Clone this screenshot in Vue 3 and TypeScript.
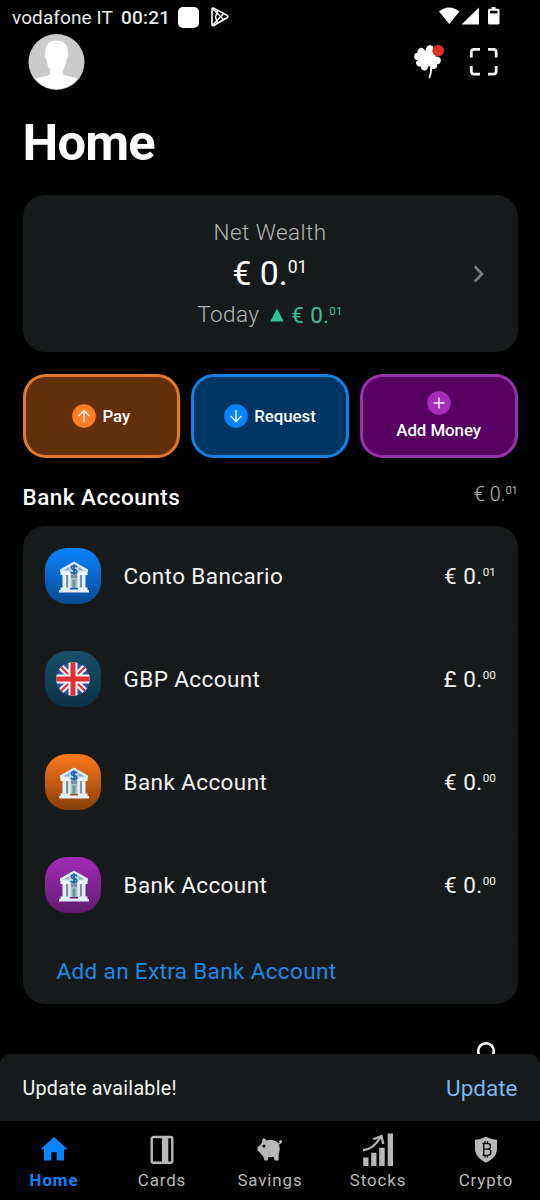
<script setup lang="ts">
interface Action {
  label: string
  kind: 'pay' | 'request' | 'add'
  icon: string
}

interface Account {
  name: string
  currency: string
  whole: string
  cents: string
  tone: 'blue' | 'teal' | 'orange' | 'purple'
  flag?: boolean
}

interface Tab {
  label: string
  active?: boolean
}

const actions: Action[] = [
  { label: 'Pay', kind: 'pay', icon: 'M12 18V6.5M6.5 12 12 6.5l5.500 5.500' },
  { label: 'Request', kind: 'request', icon: 'M12 6v11.500M6.500 12l5.500 5.500 5.500-5.500' },
  { label: 'Add Money', kind: 'add', icon: 'M12 6.500v11M6.500 12h11' },
]

const accounts: Account[] = [
  { name: 'Conto Bancario', currency: '€', whole: '0.', cents: '01', tone: 'blue' },
  { name: 'GBP Account', currency: '£', whole: '0.', cents: '00', tone: 'teal', flag: true },
  { name: 'Bank Account', currency: '€', whole: '0.', cents: '00', tone: 'orange' },
  { name: 'Bank Account', currency: '€', whole: '0.', cents: '00', tone: 'purple' },
]

const tabs: Tab[] = [
  { label: 'Home', active: true },
  { label: 'Cards' },
  { label: 'Savings' },
  { label: 'Stocks' },
  { label: 'Crypto' },
]
</script>

<template>
  <div class="screen">
    <div class="status">
      <span class="carrier">vodafone IT</span>
      <span class="clock">00:21</span>
      <i class="blob"></i>
      <svg class="play" width="20" height="22" viewBox="0 0 20 22" fill="none" stroke="#fff" stroke-width="1.6" stroke-linejoin="round">
        <path d="M2 3.500Q2 1.500 4 2.400L17 9.300Q18.800 10.500 17 11.700L4 19.300Q2 20.200 2 18.200Z" />
        <path d="M2.500 2.500 13.500 13.500M2.500 19.300 13.500 7.700M7.500 5 5.500 11l2 6" stroke-width="1.400" />
      </svg>
      <svg class="signals" width="64" height="20" viewBox="0 0 64 20" fill="#fff">
        <path d="M1 4.500Q11 -3.300 21.500 4.500L11.200 17Z" />
        <path d="M41 0.500V17.500H23.500Z" />
        <path d="M51 1.800h2.500V0h4v1.800H60q1.500 0 1.500 1.500V16q0 1.500-1.500 1.500h-8.500Q50 17.500 50 16V3.300q0-1.500 1-1.500Z" />
        <rect x="52" y="3.800" width="7.500" height="2.600" fill="#000" />
      </svg>
    </div>

    <header class="top">
      <svg class="avatar" width="57" height="57" viewBox="0 0 57 57">
        <defs><clipPath id="avatar-clip"><circle cx="28.500" cy="28" r="27" /></clipPath></defs>
        <circle cx="28.500" cy="28" r="28" fill="#cbcbcb" />
        <g clip-path="url(#avatar-clip)" fill="#fff">
          <path d="M28.500 6.500C21 6.500 16.500 11.500 17.200 19c-.8 2-.2 5.500 1.300 6.500.5 4.500 1.800 8 3.600 10v4.500c-2.300 2.500-10 2.500-15 5L4 57h49l-3-12c-5-2.500-12.500-2.500-15-5v-4.500c1.800-2 3.100-5.500 3.600-10 1.500-1 2.100-4.500 1.300-6.500.7-7.500-3.900-12.500-11.400-12.500Z" />
        </g>
      </svg>
      <div class="tools">
        <svg width="32" height="36" viewBox="0 0 32 36">
          <g fill="none" stroke="#fff" stroke-linecap="round" stroke-width="7.200">
            <path d="M14.500 14 8.200 7.500M14.500 14 4.800 12.500M14.500 14 16.800 4.800M14.500 14 23.500 7M14.500 14 6.800 19M14.500 14 11.500 22.800M14.500 14 20.500 21.500M14.500 14 24.200 16.500" />
          </g>
          <path d="M17 16Q19.500 26 16.300 34" fill="none" stroke="#fff" stroke-width="1.900" />
          <circle cx="25.200" cy="6.700" r="5.900" fill="#dc3023" />
        </svg>
        <svg width="30" height="30" viewBox="0 0 30 30" fill="none" stroke="#f4f4f4" stroke-width="2.800">
          <path d="M2.300 10.500V5.300q0-3 3-3H11M19 2.300h5.200q3 0 3 3v5.200M27.200 19v5.200q0 3-3 3H19M11 27.200H5.300q-3 0-3-3V19" />
        </svg>
      </div>
    </header>

    <main>
      <h1>Home</h1>

      <section class="wealth">
        <div class="wealth-body">
          <div class="caption">Net Wealth</div>
          <div class="total">€ 0.<span class="cents">01</span></div>
          <div class="today">
            <span>Today</span>
            <svg width="14" height="14" viewBox="0 0 14 14"><path d="M7 0.500 13.700 13.500H0.300Z" fill="#35c196" /></svg>
            <span class="gain">€ 0.<span class="cents">01</span></span>
          </div>
        </div>
        <svg class="chevron" width="12" height="18" viewBox="0 0 12 18" fill="none" stroke="#7b7d7e" stroke-width="2.600">
          <path d="M1.800 1.500 9 9l-7.200 7.500" />
        </svg>
      </section>

      <div class="actions">
        <button v-for="action in actions" :key="action.kind" :class="action.kind">
          <svg width="24" height="24" viewBox="0 0 24 24">
            <circle class="disc" cx="12" cy="12" r="11.800" />
            <path :d="action.icon" fill="none" stroke="#fff" stroke-opacity="0.9" stroke-width="1.500" />
          </svg>
          <span>{{ action.label }}</span>
        </button>
      </div>

      <div class="section-head">
        <h2>Bank Accounts</h2>
        <span class="sum">€ 0.<span class="cents">01</span></span>
      </div>

      <section class="accounts">
        <div v-for="(account, i) in accounts" :key="i" class="account">
          <span class="badge" :class="account.tone">
            <svg v-if="account.flag" width="34" height="34" viewBox="0 0 34 34">
              <defs><clipPath id="flag-clip"><circle cx="17" cy="17" r="16.800" /></clipPath></defs>
              <g clip-path="url(#flag-clip)">
                <rect width="34" height="34" fill="#2e4f9e" />
                <path d="M3 3 31 31M31 3 3 31" stroke="#f2f2f2" stroke-width="6.500" />
                <path d="M3 3 31 31M31 3 3 31" stroke="#dc3340" stroke-width="2.300" />
                <path d="M17 0V34M0 17H34" stroke="#f2f2f2" stroke-width="9" />
                <path d="M17 0V34M0 17H34" stroke="#df3037" stroke-width="5" />
              </g>
            </svg>
            <svg v-else class="bank" width="32" height="32" viewBox="0 0 32 32">
              <path d="M5 10h22v17H5Z" fill="#7993a3" />
              <path d="M16 .5 30 8.500V11H2V8.500Z" fill="#dcecf6" />
              <path d="M16 3.200 26.500 9.500h-21Z" fill="#89a7b8" />
              <circle cx="16" cy="8.500" r="5.200" fill="#b8d5e6" />
              <path d="M2.500 11h9l1.500 3h6l1.500-3h9v3h-27Z" fill="#edf6fc" />
              <path d="M19 6.200Q18 4.900 16 4.900q-2.600 0-2.600 1.700 0 1.500 2.600 1.900 2.700.4 2.700 2 0 1.800-2.700 1.800-2.100 0-3.100-1.400M16 3.500v10.200" fill="none" stroke="#1d5fae" stroke-width="1.700" />
              <path d="M4.500 13.500H8V27H4.500ZM10.200 13.500h2.600V27h-2.600ZM19.300 13.500h2.600V27h-2.600ZM24 13.500h3.500V27H24Z" fill="#e6f0f7" />
              <path d="M13 17h6v10h-6Z" fill="#a9c4cd" />
              <path d="M14.500 18.500h3V27h-3Z" fill="#6f969f" />
              <path d="M2.500 26.500h9.500V28.500h8v-2H29.500V29H31v2.500H1V29h1.500Z" fill="#e6effa" />
            </svg>
          </span>
          <span class="name">{{ account.name }}</span>
          <span class="balance">{{ account.currency }} {{ account.whole }}<span class="cents">{{ account.cents }}</span></span>
        </div>
        <a class="extra">Add an Extra Bank Account</a>
      </section>

      <div class="peek">
        <svg width="20" height="20" viewBox="0 0 20 20"><circle cx="10" cy="10" r="7.800" fill="none" stroke="#fff" stroke-width="2.600" /></svg>
      </div>
    </main>

    <div class="snackbar">
      <span class="message">Update available!</span>
      <span class="update">Update</span>
    </div>

    <nav>
      <a v-for="tab in tabs" :key="tab.label" :class="{ active: tab.active }">
        <svg width="36" height="36" viewBox="0 0 36 36" fill="currentColor">
          <path v-if="tab.label === 'Home'" d="M18 5 31.500 17.200H28V28.500H20.700V20.200H15.300V28.500H8V17.200H4.500Z" />
          <template v-else-if="tab.label === 'Cards'">
            <rect x="7.700" y="5" width="20.600" height="25.800" rx="1.800" fill="none" stroke="currentColor" stroke-width="2.400" />
            <path d="M18 4.300h6.300v27H18Z" />
          </template>
          <template v-else-if="tab.label === 'Savings'">
            <path d="M10 10.500Q9.500 8 11.500 6q2.200 1 3.200 2.700Q18.500 7 22 8.500q4.500 1.200 5.500 6 .8 4-.8 7.500V28.500H22.500L21.700 25H16.500L15.500 28.500H12.500L11 24Q8.500 22.500 7.500 20L5.500 18.500V14.800L7.700 13.500Z" />
            <path d="M26.300 11.500q2.200.5 2.700-1.700" fill="none" stroke="currentColor" stroke-width="1.600" />
            <circle cx="28.700" cy="9.500" r="1.500" />
            <circle cx="12" cy="14" r="1.500" fill="#000" />
          </template>
          <template v-else-if="tab.label === 'Stocks'">
            <path d="M3.200 25.500h5.300V34H3.200ZM11.200 20.800h5.300V34h-5.300ZM19.200 15.700h5.500V34h-5.500ZM27.700 1.500H33V34h-5.300Z" />
            <path d="M3 18.200Q13.500 17.500 20.500 5" fill="none" stroke="currentColor" stroke-width="2.300" />
            <path d="M13.300 7.300 21.500 4 23.200 12" fill="none" stroke="currentColor" stroke-width="2.300" />
          </template>
          <template v-else>
            <path d="M18 4.800Q23 7.500 29 7.800V18Q28 26 18 30.800 8 26 7 18V7.800Q13 7.500 18 4.800Z" />
            <path d="M14.500 11.500h5.200q2.800 0 2.800 2.700 0 2.900-2.800 2.900h-4 4.200q3 0 3 3 0 3.200-3 3.200h-5.400M15.700 11.500v11.800M17 9.300v2.200M19.500 9.300v2.200M17 23.300v2.300M19.500 23.300v2.300" fill="none" stroke="#000" stroke-width="1.300" />
          </template>
        </svg>
        <span>{{ tab.label }}</span>
      </a>
    </nav>
  </div>
</template>

<style>
body {
  margin: 0;
  background: #000;
}
</style>

<style scoped>
.screen {
  width: 540px;
  height: 1200px;
  overflow: hidden;
  display: flex;
  flex-direction: column;
  background: #000;
  color: #fff;
  font-family: Roboto, "Noto Sans", sans-serif;
}
.screen svg { flex: none; display: block; }
.cents {
  font-size: 0.52em;
  line-height: 0;
  letter-spacing: 0.1px;
  vertical-align: 0.7em;
}
.status {
  flex: none;
  height: 34px;
  display: flex;
  align-items: center;
  padding: 0 38px 0 12px;
  font-size: 19px;
  color: #e9e9e9;
  box-sizing: border-box;
}
.carrier { font-size: 19px; letter-spacing: 0.1px; }
.clock { margin-left: 8px; font-weight: 500; letter-spacing: 0.2px; }
.blob { width: 21px; height: 21px; margin-left: 8px; border-radius: 5px; background: #fff; }
.play { margin-left: 11px; }
.signals { margin-left: auto; }
.top {
  flex: none;
  height: 56px;
  display: flex;
  justify-content: space-between;
  align-items: center;
  padding: 0 41.5px 0 28px;
}
.tools { display: flex; align-items: center; gap: 23.5px; }
main {
  flex: none;
  height: 964px;
  overflow: hidden;
  padding: 0 22.5px;
  box-sizing: border-box;
}
h1 {
  margin: 0;
  height: 105px;
  line-height: 106px;
  font-size: 50.6px;
  font-weight: 700;
  letter-spacing: -0.8px;
}
.wealth {
  height: 157px;
  display: flex;
  align-items: center;
  border-radius: 22px;
  background: #171a1b;
}
.wealth-body {
  flex: 1;
  padding-left: 45px;
  text-align: center;
}
.caption { line-height: 28px; font-size: 22.5px; font-weight: 300; letter-spacing: 0.45px; color: #b4b6b6; }
.total { line-height: 56px; font-size: 33.75px; }
.today {
  display: flex;
  justify-content: center;
  align-items: flex-start;
  height: 28px;
  line-height: 24px;
  font-size: 22.5px;
  font-weight: 300;
  letter-spacing: 0.4px;
  color: #b4b6b6;
}
.today svg { margin: 6px 7px 0 11px; }
.gain { padding-top: 1px; color: #35c196; font-weight: 400; letter-spacing: 0.3px; }
.chevron { margin: 0 33px 0 0; }
.actions {
  display: grid;
  grid-template-columns: repeat(3, 1fr);
  gap: 11px;
  height: 84px;
  margin-top: 22px;
}
button {
  display: flex;
  align-items: center;
  justify-content: center;
  gap: 6px;
  padding: 0;
  border: 3px solid;
  border-radius: 23px;
  color: #fff;
  font: 500 16.9px/22px Roboto, sans-serif;
  letter-spacing: -0.08px;
}
.pay { background: #632f09; border-color: #e47a2e; }
.pay .disc { fill: #ff7d24; }
.request { background: #003664; border-color: #1580e6; }
.request .disc { fill: #0a84ff; }
.add { flex-direction: column; gap: 4px; background: #550060; border-color: #9733aa; }
.add .disc { fill: #a52db8; }
.section-head {
  display: flex;
  justify-content: space-between;
  height: 68px;
}
h2 { margin: 0; font-size: 22.5px; line-height: 79px; font-weight: 500; letter-spacing: 0.48px; }
.sum { font-size: 19.7px; line-height: 74px; font-weight: 300; letter-spacing: 0.2px; opacity: 0.7; }
.sum .cents { font-weight: 400; }
.accounts {
  height: 478px;
  border-radius: 22px;
  background: #171a1b;
  overflow: hidden;
}
.account {
  height: 103px;
  display: flex;
  align-items: flex-start;
  padding: 22px 21.5px 0 22.5px;
  box-sizing: border-box;
  font-size: 22.5px;
  line-height: 57px;
  color: #f4f4f4;
  border-bottom: 1px solid #1a1d1f;
}
.badge {
  width: 56px;
  height: 56px;
  display: flex;
  align-items: center;
  justify-content: center;
  border-radius: 22px;
}
.bank { margin: 1px 0 0 1px; }
.blue { background: linear-gradient(#0a84ff, #064b92); }
.teal { background: linear-gradient(#17506a, #0b3145); }
.orange { background: linear-gradient(#ff7a1c, #863e08); }
.purple { background: linear-gradient(#a32bb8, #611c70); }
.name { margin-left: 22.5px; letter-spacing: 0.4px; }
.balance { margin-left: auto; letter-spacing: 0.45px; }
.extra {
  display: block;
  padding-left: 34px;
  line-height: 67px;
  font-size: 22.5px;
  letter-spacing: 0.35px;
  color: #1e88e5;
}
.peek { height: 50px; padding: 37px 22px 0 0; display: flex; justify-content: flex-end; }
.snackbar {
  flex: none;
  height: 67px;
  display: flex;
  align-items: center;
  justify-content: space-between;
  padding: 1px 22.5px 0;
  box-sizing: border-box;
  border-radius: 11px 11px 0 0;
  background: #171a1b;
  color: #f4f4f4;
}
.message { font-size: 19.7px; letter-spacing: 0.27px; }
.update { font-size: 22.5px; color: #79b8f0; }
nav {
  flex: none;
  height: 79px;
  display: grid;
  grid-template-columns: repeat(5, 1fr);
}
nav a {
  display: flex;
  flex-direction: column;
  align-items: center;
  padding-top: 11px;
  font-size: 16.9px;
  line-height: 24px;
  letter-spacing: 0.9px;
  color: #b8b8b8;
}
nav .active { color: #0a84ff; font-weight: 700; }
</style>
